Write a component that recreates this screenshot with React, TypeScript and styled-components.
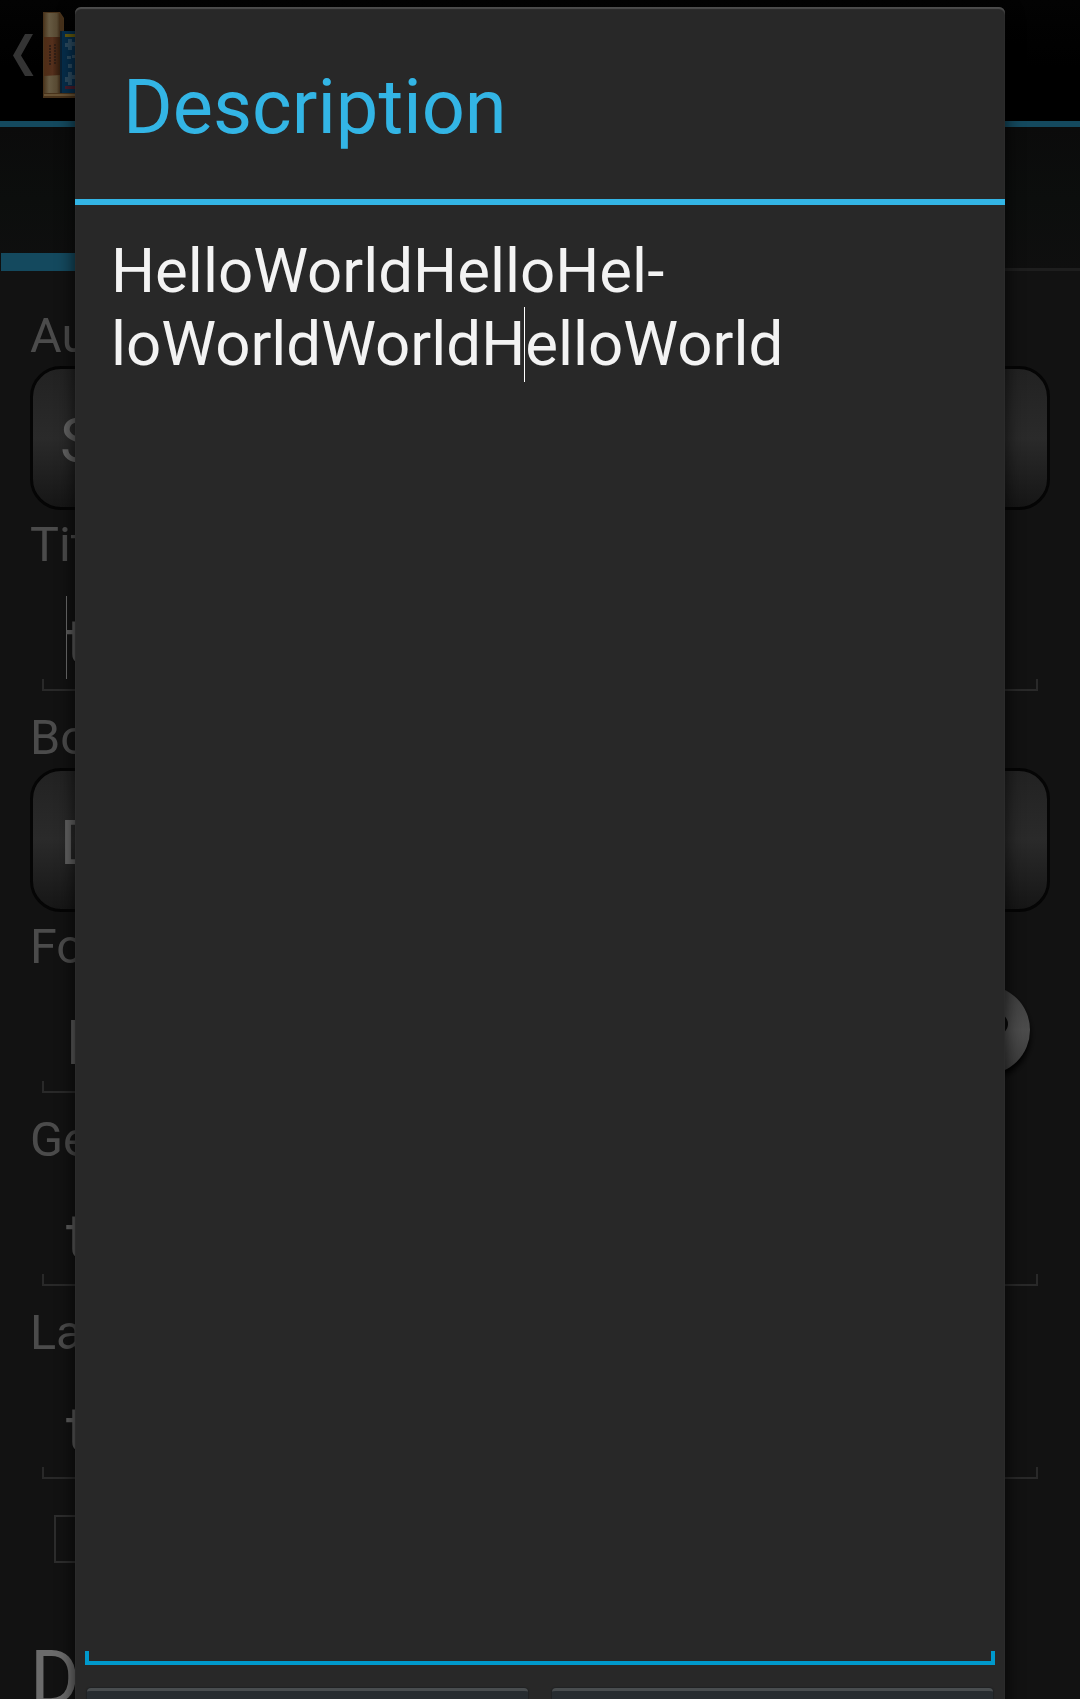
import React from "react";
import styled, { createGlobalStyle } from "styled-components";

const GlobalStyle = createGlobalStyle`
  html, body { margin: 0; background: #121212; }
  body { overflow: hidden; }
  * { box-sizing: border-box; }
`;

const Screen = styled.div`
  position: relative;
  width: 1080px;
  height: 1699px;
  overflow: hidden;
  background: #121212;
  font-family: Roboto, "Liberation Sans", sans-serif;
`;

const Page = styled.div`
  display: flex;
  flex-direction: column;
  width: 100%;
`;

const ActionBar = styled.header`
  display: flex;
  align-items: flex-start;
  height: 127px;
  padding: 12px 0 0 13px;
  background: linear-gradient(#030303, #000 55%);
  border-bottom: 6px solid #14495e;
`;

const BackIcon = styled.svg`
  flex: none;
  width: 21px;
  height: 43px;
  margin: 22px 9px 0 0;
`;

const BookIcon = styled.svg`
  flex: none;
  width: 44px;
  height: 86px;
`;

const TabBar = styled.nav`
  display: flex;
  align-items: flex-end;
  height: 144px;
  background: linear-gradient(#0b0b0b, #0c0e0d 50%, #0f0f0f);
`;

const Tab = styled.div<{ $active?: boolean }>`
  flex: 1;
  height: ${(p) => (p.$active ? 18 : 3)}px;
  margin-left: ${(p) => (p.$active ? 1 : 0)}px;
  background: ${(p) => (p.$active ? "#14495e" : "#1e1e1e")};
`;

const Form = styled.main`
  display: flex;
  flex-direction: column;
  padding: 36px 30px 0;
`;

const Label = styled.div`
  height: 57px;
  font-size: 48.5px;
  line-height: 57px;
  color: #4b4b4b;
`;

const Spinner = styled.div`
  height: 144px;
  margin: 2px 0 6px;
  padding: 35px 27px 0;
  border: 3px solid #050505;
  border-radius: 31px;
  background: linear-gradient(#222 0%, #2a2a2a 50%, #262626 60%, #161616 100%);
  font-size: 62px;
  line-height: 74px;
  color: #626262;
`;

const InputRow = styled.div`
  display: flex;
  align-items: flex-start;
  position: relative;
  height: 118px;
  margin: 0 12px 18px;
  padding: 31px 24px 0;
  font-size: 62px;
  line-height: 74px;
  color: #5c5c5c;
`;

const Underline = styled.span<{ $color: string; $thick: number; $tick: number; $left: number; $right: number }>`
  position: absolute;
  left: ${(p) => p.$left}px;
  right: ${(p) => p.$right}px;
  bottom: 0;
  height: ${(p) => p.$tick}px;
  border: ${(p) => p.$thick}px solid ${(p) => p.$color};
  border-top: 0;
`;

const FieldCaret = styled.i`
  width: 1px;
  height: 83px;
  margin: -8px -1px 0 0;
  background: #6a6a6a;
`;

const HelpIcon = styled.svg`
  position: absolute;
  right: -2px;
  top: 4px;
  width: 104px;
  height: 108px;
`;

const Checkbox = styled.div`
  width: 48px;
  height: 48px;
  margin: 18px 0 0 24px;
  border: 2px solid #2d2d2d;
`;

const SectionTitle = styled.div`
  margin-top: 70px;
  font-size: 76px;
  line-height: 90px;
  color: #6b6b6b;
`;

const Dialog = styled.section`
  position: absolute;
  left: 75px;
  top: 7px;
  display: flex;
  flex-direction: column;
  width: 930px;
  height: 1800px;
  border-radius: 6px;
  background: #282828;
  box-shadow: 0 6px 18px rgba(0, 0, 0, 0.75), inset 0 2px 1px #4c4c4c;
`;

const DialogTitle = styled.h1`
  flex: none;
  height: 198px;
  margin: 0;
  padding: 56px 48px 0;
  border-bottom: 6px solid #33b5e5;
  font-size: 75.8px;
  font-weight: 400;
  line-height: 90px;
  color: #33b5e5;
`;

const Editor = styled.div`
  position: relative;
  flex: none;
  height: 1460px;
  padding: 30px 36px 0;
  font-size: 61.8px;
  line-height: 73px;
  color: #f3f3f3;
  white-space: nowrap;
`;

const Caret = styled.i`
  position: relative;
  &::after {
    content: "";
    position: absolute;
    left: -1px;
    top: -1px;
    width: 1px;
    height: 75px;
    background: #fff;
  }
`;

const Buttons = styled.div`
  display: flex;
  gap: 24px;
  padding: 23px 12px 0;
`;

const DialogButton = styled.div`
  flex: 1;
  height: 100px;
  border-radius: 4px;
  background: #272c30;
  border-top: 3px solid #494d4f;
  box-shadow: 0 0 1px 1px #202224;
`;

type FieldProps = {
  label: string;
  text: string;
  caret?: boolean;
  trailing?: React.ReactNode;
};

function Field({ label, text, caret, trailing }: FieldProps) {
  return (
    <>
      <Label>{label}</Label>
      <InputRow>
        {caret && <FieldCaret />}
        {text}
        <Underline $color="#292929" $thick={2} $tick={12} $left={0} $right={trailing ? 112 : 0} />
        {trailing}
      </InputRow>
    </>
  );
}

function Books() {
  return (
    <BookIcon viewBox="0 0 44 86">
      <defs>
        <linearGradient id="spine" x1="0" x2="1" y1="0" y2="0">
          <stop offset="0" stopColor="#4c3820" />
          <stop offset=".3" stopColor="#665a42" />
          <stop offset=".75" stopColor="#594b34" />
          <stop offset="1" stopColor="#352310" />
        </linearGradient>
        <linearGradient id="band" x1="0" x2="1" y1="0" y2="0">
          <stop offset="0" stopColor="#4e2d16" />
          <stop offset=".5" stopColor="#542f1c" />
          <stop offset="1" stopColor="#2c190b" />
        </linearGradient>
      </defs>
      <path d="M0 0H17L21 6V19H44V86H0Z" fill="#49331b" />
      <path d="M1 1H16L18 8V81H1Z" fill="url(#spine)" />
      <path d="M16 1L20 7V18L17 24Z" fill="#46311b" />
      <path d="M1 25H18V63L1 64Z" fill="url(#band)" />
      <path d="M7 33V53M12 32V53" stroke="#291b15" strokeWidth="1.5" strokeDasharray="2 1" />
      <path d="M18 19H44V81H18Z" fill="#062e4c" />
      <path d="M18 19V81" stroke="#0b2032" strokeWidth="2" />
      <path d="M22 22H44V25H22Z" fill="#665b0d" />
      <path
        d="M25 27H29V30H32V34H29V38H25V35H22V31H25ZM24 44H28V47H24ZM29 43H32V46H29ZM25 52H29V56H25ZM25 60H29V63H32V67H29V73H25V70H22V65H25Z"
        fill="#2b4a5f"
      />
      <path d="M22 74H44V77H22Z" fill="#471c2c" />
      <path d="M1 83H44" stroke="#685335" strokeWidth="2" />
    </BookIcon>
  );
}

function Help() {
  return (
    <HelpIcon viewBox="0 0 104 108">
      <defs>
        <linearGradient id="help" x1="0" x2="0" y1="0" y2="1">
          <stop offset="0" stopColor="#3d3d3d" />
          <stop offset=".5" stopColor="#4c4c4c" />
          <stop offset="1" stopColor="#383838" />
        </linearGradient>
        <filter id="soft" x="-20%" y="-20%" width="140%" height="140%">
          <feGaussianBlur stdDeviation="3" />
        </filter>
      </defs>
      <circle cx="50" cy="56" r="44" fill="#050505" filter="url(#soft)" />
      <circle cx="49.5" cy="51" r="44.5" fill="url(#help)" />
      <path d="M33 44C35 32 68 33 68 45C68 54 51 54 50 67" fill="none" stroke="#0a0a0a" strokeWidth="8" />
      <circle cx="50" cy="78" r="5" fill="#0a0a0a" />
    </HelpIcon>
  );
}

export default function App() {
  return (
    <Screen>
      <GlobalStyle />
      <Page>
        <ActionBar>
          <BackIcon viewBox="0 0 21 43">
            <path d="M12 0H20L8 21.5L20.5 42H12L0 21.5Z" fill="#343434" />
          </BackIcon>
          <Books />
        </ActionBar>
        <TabBar>
          <Tab $active />
          <Tab />
        </TabBar>
        <Form>
          <Label>Au</Label>
          <Spinner>S</Spinner>
          <Field label="Tit" text="t" caret />
          <Label>Bo</Label>
          <Spinner>D</Spinner>
          <Field label="Fo" text="H" trailing={<Help />} />
          <Field label="Ge" text="t" />
          <Field label="La" text="t" />
          <Checkbox />
          <SectionTitle>D</SectionTitle>
        </Form>
      </Page>
      <Dialog>
        <DialogTitle>Description</DialogTitle>
        <Editor>
          HelloWorldHelloHel-
          <br />
          loWorldWorldH
          <Caret />
          elloWorld
          <Underline $color="#0099cc" $thick={4} $tick={14} $left={10} $right={10} />
        </Editor>
        <Buttons>
          <DialogButton />
          <DialogButton />
        </Buttons>
      </Dialog>
    </Screen>
  );
}
